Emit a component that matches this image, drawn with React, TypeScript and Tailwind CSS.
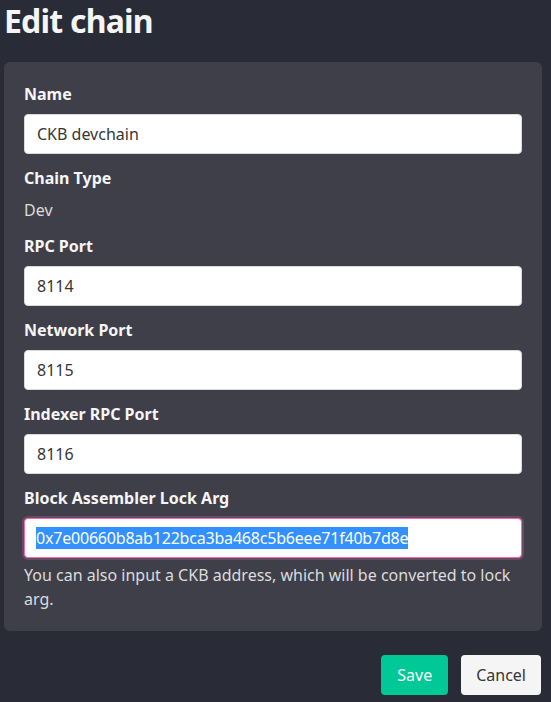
import React from 'react';

const ports = [
  { label: 'RPC Port', value: '8114' },
  { label: 'Network Port', value: '8115' },
  { label: 'Indexer RPC Port', value: '8116' },
];

const Label: React.FC<{ children: React.ReactNode }> = ({ children }) => (
  <label className="block mb-2 leading-6 font-bold text-[#f5f5f5]">{children}</label>
);

const TextBox: React.FC<{ value: string }> = ({ value }) => (
  <div className="h-10 flex items-center px-3 bg-white rounded border border-[#dbdbdb] text-[#363636]">
    {value}
  </div>
);

export default function App() {
  return (
    <div
      className="min-h-[702px] bg-[#292b37] pl-1 pr-[9px] text-base"
      style={{ fontFamily: '"Noto Sans", "Open Sans", sans-serif' }}
    >
      <h1 className="text-[32px] leading-10 font-bold tracking-[-0.8px] text-[#f5f5f5] mb-[21px] pt-px">Edit chain</h1>

      <div className="bg-[#3f3f4a] rounded-md px-5 pt-5 pb-5">
        <div className="mb-3">
          <Label>Name</Label>
          <TextBox value="CKB devchain" />
        </div>

        <div className="mb-3">
          <Label>Chain Type</Label>
          <div className="leading-6 text-[#dcdcdc]">Dev</div>
        </div>

        {ports.map((p) => (
          <div key={p.label} className="mb-3">
            <Label>{p.label}</Label>
            <TextBox value={p.value} />
          </div>
        ))}

        <div>
          <Label>Block Assembler Lock Arg</Label>
          <div className="h-10 flex items-center px-[11px] bg-white rounded border border-[#f06bb0] shadow-[0_0_0_2px_rgba(240,107,176,0.25)]">
            <span className="bg-[#3390ff] text-white leading-[22px] tracking-[-0.2px]">0x7e00660b8ab122bca3ba468c5b6eee71f40b7d8e</span>
          </div>
          <p className="mt-[5px] leading-6 text-[#dcdcdc]">
            You can also input a CKB address, which will be converted to lock arg.
          </p>
        </div>
      </div>

      <div className="flex justify-end gap-[13px] mt-6 pr-px">
        <button className="h-10 px-[16px] rounded bg-[#00c896] text-white">Save</button>
        <button className="h-10 px-[15px] rounded bg-[#f5f5f5] text-[#363636]">Cancel</button>
      </div>
    </div>
  );
}
